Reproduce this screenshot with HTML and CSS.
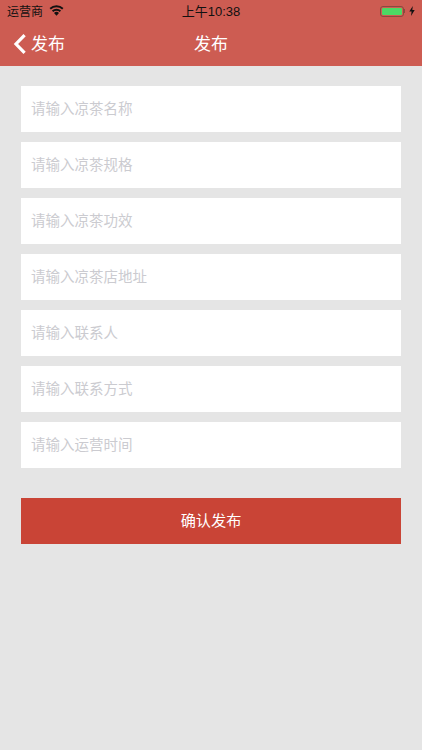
FILE: index.html
```html
<!DOCTYPE html>
<html>
  <head>
    <meta charset="UTF-8">
    <title>发布</title>
    <link rel="stylesheet" href="styles.css">
  </head>
  <body>
    <header class="top">
      <div class="status">
        <div class="status-left">
          <span class="carrier">运营商</span>
          <svg class="wifi" width="15" height="11" viewBox="0 0 15 11">
            <path d="M7.5 10.8 L5 8 A3.6 3.6 0 0 1 10 8 Z" fill="#111"/>
            <path d="M3.6 6.3 A5.6 5.6 0 0 1 11.4 6.3" fill="none" stroke="#111" stroke-width="1.9"/>
            <path d="M1.2 3.8 A9 9 0 0 1 13.8 3.8" fill="none" stroke="#111" stroke-width="1.9"/>
          </svg>
        </div>
        <span class="clock">上午10:38</span>
        <div class="status-right">
          <div class="battery"><div class="battery-fill"></div></div>
          <div class="battery-cap"></div>
          <svg class="bolt" width="6" height="10" viewBox="0 0 6 10">
            <path d="M3.8 0 L0.3 5.6 H2.6 L2 10 L5.7 4 H3.3 Z" fill="#111"/>
          </svg>
        </div>
      </div>
      <div class="nav">
        <div class="back">
          <svg width="14" height="22" viewBox="0 0 14 22">
            <path d="M11.6 2.2 L3 11 L11.6 19.8" fill="none" stroke="#fff" stroke-width="3.2"/>
          </svg>
          <span class="nav-text">发布</span>
        </div>
        <div class="title">发布</div>
      </div>
    </header>
    <section class="form">
      <div class="field">请输入凉茶名称</div>
      <div class="field">请输入凉茶规格</div>
      <div class="field">请输入凉茶功效</div>
      <div class="field">请输入凉茶店地址</div>
      <div class="field">请输入联系人</div>
      <div class="field">请输入联系方式</div>
      <div class="field">请输入运营时间</div>
      <div class="submit">确认发布</div>
    </section>
  </body>
</html>
```

FILE: styles.css
```css
*{
    box-sizing: border-box;
}
html,body{
    height:100%;
}
body{
    margin:0;
    background:#e5e5e5;
    font-family:"Liberation Sans","Noto Sans CJK SC",sans-serif;
}
.top{
    height:66px;
    background:#cd5c52;
}
.status{
    height:22px;
    padding:0 7px;
    display:flex;
    align-items:center;
    justify-content:space-between;
    position:relative;
    font-size:12px;
    color:#111;
}
.carrier{
    margin-top:-2px;
}
.status-left{
    display:flex;
    align-items:center;
    gap:6px;
}
.wifi{
    margin-top:-2px;
}
.clock{
    position:absolute;
    left:0;
    right:0;
    top:1px;
    text-align:center;
    font-size:13px;
}
.status-right{
    display:flex;
    align-items:center;
}
.battery{
    width:24px;
    height:11px;
    padding:1px;
    border:1px solid #8a4a3f;
    border-radius:3px;
}
.battery-fill{
    height:100%;
    background:#4cd964;
    border-radius:1px;
}
.battery-cap{
    width:1px;
    height:4px;
    background:#8a4a3f;
    margin-right:4px;
}
.nav{
    height:44px;
    display:flex;
    align-items:center;
    position:relative;
    color:#fff;
}
.back{
    display:flex;
    align-items:center;
    gap:4px;
    padding-left:13px;
    font-size:17px;
}
.nav-text{
    margin-top:-4px;
}
.title{
    position:absolute;
    left:0;
    right:0;
    top:8px;
    text-align:center;
    font-size:17px;
}
.form{
    padding:20px 21px 0;
    display:flex;
    flex-direction:column;
    gap:10px;
}
.field{
    height:46px;
    padding:0 0 4px 10px;
    display:flex;
    align-items:center;
    background:#fff;
    color:#cbcbd0;
    font-size:14.5px;
}
.submit{
    height:46px;
    margin-top:20px;
    padding-bottom:4px;
    display:flex;
    align-items:center;
    justify-content:center;
    background:#c94436;
    color:#fff;
    font-size:15.2px;
}
```
